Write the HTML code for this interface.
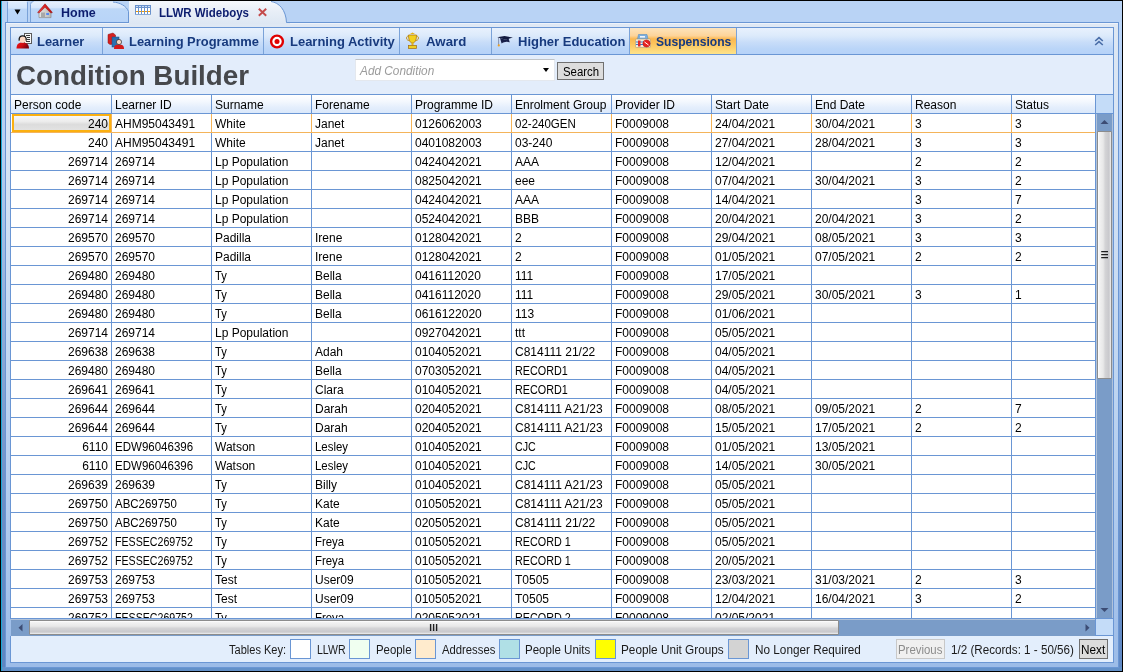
<!DOCTYPE html>
<html><head><meta charset="utf-8">
<style>
*{box-sizing:border-box;margin:0;padding:0}
html,body{width:1123px;height:672px;overflow:hidden;background:#000}
body{position:relative;font-family:"Liberation Sans",sans-serif}
#wrap{position:absolute;left:0;top:0;width:1123px;height:672px;background:#000;will-change:transform;overflow:hidden}
.a{position:absolute}
.sx{transform-origin:0 0}
/* frame */
#cyan{left:1px;top:1px;width:1px;height:670px;background:#1aa8d4}
#outerL{left:2px;top:1px;width:3px;height:670px;background:linear-gradient(#c0d6f5 0%,#b6cef2 22%,#94b0dc 45%,#6c8ec6 75%,#5e86c2 100%)}
#outerR{left:1119px;top:1px;width:3px;height:670px;background:linear-gradient(#bcd6f8 0%,#b4cff6 25%,#8eb0e0 55%,#6a90c8 80%,#5f88c4 100%)}
#outerB{left:2px;top:667px;width:1120px;height:4px;background:#6290c8}
#strip{left:2px;top:1px;width:1120px;height:21px;background:#b9d3f5}
#panel{left:5px;top:22px;width:1114px;height:646px;border:1px solid #6a96d4;background:linear-gradient(#dde7f3 0%,#d8e4f3 18%,#c6daf2 45%,#b2ccee 75%,#9cbce8 100%)}
#panelhl{left:6px;top:23px;width:1112px;height:4px;background:#dfe8f4;border-top:1px solid #eef3fa}
/* tabs */
#dd{left:7px;top:1px;width:21px;height:21px;border:1px solid #7aa2d8;border-top-color:#e6f0fc;border-bottom:none;border-radius:2px 2px 0 0;background:linear-gradient(#deecfd 0%,#d2e4fa 30%,#bcd7f8 36%,#b8d4f8 100%)}
#home{left:30px;top:1px;width:99px;height:22px;border:1px solid #7aa2d8;border-top-color:#e6f0fc;border-bottom:none;border-radius:3px 0 0 0;background:linear-gradient(#deecfd 0%,#d2e4fa 30%,#bcd7f8 36%,#b8d4f8 100%)}
#hometxt{left:61px;top:5px;font-size:13px;font-weight:bold;color:#0c1d6e;transform:scaleX(0.96)}
#acttxt{left:159px;top:5px;font-size:13px;font-weight:bold;color:#0c1d6e;transform:scaleX(0.885)}
/* nav */
#nav{left:10px;top:27px;width:1104px;height:28px;border:1px solid #6a96d4;background:linear-gradient(#e8f1fd 0%,#dceafb 30%,#c8ddf9 55%,#bad5f8 80%,#b6d2f8 100%)}
.sep{top:28px;width:1px;height:26px;background:#7aa2d8}
.nt{top:33.5px;font-size:13.6px;font-weight:bold;color:#173a7e;white-space:nowrap}
#susp{left:630px;top:28px;width:107px;height:26px;background:linear-gradient(#fde4bc 0%,#fdd49a 30%,#fbb850 42%,#fcc45c 60%,#fde38a 100%);border-right:1px solid #7aa2d8}
#title{left:10px;top:55px;width:1104px;height:40px;border:1px solid #6a96d4;border-top:none;background:#e3edfb}
#ttl{left:16px;top:59px;font-size:28.5px;transform:scaleX(0.975);transform-origin:0 0;font-weight:bold;color:#46484c;white-space:nowrap}
#combo{left:355px;top:59px;width:200px;height:22px;background:#fff;border:1px solid #e4e8ee;border-top-color:#c0c4c8}
#combotxt{left:360px;top:64px;font-size:12px;font-style:italic;color:#9c9c9c;transform:scaleX(0.985);transform-origin:0 0}
#comboarr{left:543px;top:68px;width:0;height:0;border-left:3.5px solid transparent;border-right:3.5px solid transparent;border-top:4.5px solid #000}
#search{left:557px;top:62px;width:47px;height:18px;background:#dddddd;border:1px solid #707070}
#searchtxt{left:562.5px;top:64.5px;font-size:12px;color:#000;transform:scaleX(0.95);transform-origin:0 0}
/* grid */
#grid{left:10px;top:94px;width:1104px;height:525px;background:#fff;border:1px solid #6a96d4;border-bottom:none}
#hdr{left:11px;top:95px;width:1085px;height:18px;background:linear-gradient(#ffffff 0%,#f4f8fe 35%,#e4eefc 70%,#dae8fb 100%)}
#hdrline{left:11px;top:113px;width:1085px;height:1px;background:#6a96d4}
.hc{position:absolute;top:98px;height:16px;padding-left:3px;font-size:12px;color:#000;white-space:nowrap;overflow:hidden}
.c{position:absolute;height:19px;line-height:20px;padding-left:3px;font-size:12px;color:#000;white-space:nowrap;overflow:hidden}
.c .s{display:inline-block;transform-origin:0 0}
.c.r{text-align:right;padding-left:0;padding-right:3px}
.vl{position:absolute;top:95px;width:1px;height:523px;background:#6a96d4}
.hl{position:absolute;left:11px;width:1085px;height:1px;background:#6a96d4}
.hl.o{background:#f4b45a}
#sel{left:12px;top:114px;width:99px;height:18px;border:2px solid #fbb010;background:linear-gradient(#f8f8f8 0%,#ececec 40%,#dcdcdc 60%,#e2e2e2 100%)}
/* scrollbars */
#vsb{left:1095px;top:95px;width:19px;height:524px;border-left:1px solid #6a96d4;border-right:1px solid #6a96d4;background:#7a9cc8;box-shadow:inset 1px 0 #b0c2da,inset -1px 0 #b0c2da}
#vsbhdr{left:1096px;top:95px;width:17px;height:19px;background:#c4dcf8;border-bottom:1px solid #6a96d4}
#vthumb{left:1097px;top:131px;width:15px;height:248px;border:1px solid #8c8c8c;border-radius:1px;background:linear-gradient(90deg,#ffffff 0%,#f2f2f2 12%,#e8e8e8 40%,#d4d4d6 55%,#c8c8cc 85%,#f0f0f0 100%)}
#hsb{left:11px;top:618px;width:1084px;height:18px;background:#7a9cc8;border-top:1px solid #6a96d4;box-shadow:inset 0 1px #b0c2da}
#hthumb{left:29px;top:620px;width:810px;height:15px;border:1px solid #8c8c8c;border-radius:1px;background:linear-gradient(#ffffff 0%,#f2f2f2 12%,#e8e8e8 40%,#d4d4d6 55%,#c8c8cc 85%,#f0f0f0 100%)}
#corner{left:1095px;top:618px;width:19px;height:18px;background:#c4dcf8;border:1px solid #6a96d4}
#footer{left:10px;top:636px;width:1104px;height:27px;background:#e3eefc;border:1px solid #6a96d4;border-top:none}
.ft{top:643px;font-size:12px;color:#1a1a1a;white-space:nowrap}
.kb{top:639px;width:21px;height:20px;border:1px solid #6a96d4}
.btn{top:639px;height:20px;border:1px solid #b0b0b0}
</style></head><body><div id="wrap">
<div class="a" id="cyan"></div>
<div class="a" id="outerL"></div>
<div class="a" id="outerR"></div>
<div class="a" id="outerB"></div>
<div class="a" id="strip"></div>
<div class="a" id="panel"></div>
<div class="a" id="panelhl"></div>

<div class="a" id="dd"></div>
<svg class="a" style="left:14px;top:9px" width="7" height="6" viewBox="0 0 7 6"><path d="M0.5 0.5 H6.5 L3.5 5.5 Z" fill="#000"/></svg>
<svg class="a" style="left:29px;top:1px" width="101" height="21" viewBox="0 0 101 21">
 <defs><linearGradient id="htg" x1="0" y1="0" x2="0" y2="1"><stop offset="0" stop-color="#e8f1fd"/><stop offset="0.3" stop-color="#d6e6fb"/><stop offset="0.36" stop-color="#bcd7f8"/><stop offset="1" stop-color="#b8d4f8"/></linearGradient></defs>
 <path d="M1.5 21 V3.5 Q1.5 0.5 4.5 0.5 H84 C91 1 97.5 5 99.5 10.5 V21 Z" fill="url(#htg)"/>
 <path d="M1.5 21 V3.5 Q1.5 0.5 4.5 0.5" fill="none" stroke="#7aa2d8" stroke-width="1"/>
 <path d="M84 1 C91 1.5 97.5 5 99.5 10.5 V21" fill="none" stroke="#6a96d4" stroke-width="1"/>
</svg>
<svg class="a" style="left:37px;top:3px" width="16" height="16" viewBox="0 0 16 16">
 <defs><linearGradient id="hb" x1="0" y1="0" x2="1" y2="0"><stop offset="0" stop-color="#e8e8e8"/><stop offset="1" stop-color="#b8b8b8"/></linearGradient>
 <linearGradient id="rf" x1="0" y1="0" x2="1" y2="0"><stop offset="0" stop-color="#f04040"/><stop offset="1" stop-color="#c00808"/></linearGradient></defs>
 <path d="M2 8.5 L8 3 L14 8.5 L14 14.6 L2 14.6 Z" fill="url(#hb)" stroke="#8a8a8a" stroke-width="0.7"/>
 <rect x="4" y="9.5" width="4" height="5" fill="#a8a8a8"/>
 <rect x="9.2" y="10" width="2.8" height="2" fill="#5a8af0"/>
 <path d="M0.8 9.2 L8 0.8 L15.2 9.2 L15.2 9.8 L13.6 9.8 L8 4.2 L2.4 9.8 L0.8 9.8 Z" fill="url(#rf)" stroke="#901010" stroke-width="0.5"/>
</svg>
<div class="a sx" id="hometxt">Home</div>

<svg class="a" style="left:128px;top:1px" width="162" height="23" viewBox="0 0 162 23">
 <defs><linearGradient id="tg" x1="0" y1="0" x2="0" y2="1"><stop offset="0" stop-color="#f6f9fd"/><stop offset="0.45" stop-color="#e8eef7"/><stop offset="1" stop-color="#dde7f3"/></linearGradient></defs>
 <path d="M1 23 L1 0 L143 0 C151 1.5 158 9 158.5 21.5 L162 21.5 L162 23 Z" fill="url(#tg)"/>
 <path d="M143 0.5 C151 1.5 158 9 158.5 21.5 L162 21.5" fill="none" stroke="#6a96d4" stroke-width="1"/>
</svg>
<svg class="a" style="left:135px;top:5px" width="16" height="10" viewBox="0 0 16 10" shape-rendering="crispEdges">
 <rect x="0" y="0" width="16" height="10" fill="#6a92cc"/>
 <g fill="#fff"><rect x="1" y="3" width="2" height="6"/><rect x="4" y="3" width="2" height="6"/><rect x="7" y="3" width="2" height="6"/><rect x="10" y="3" width="2" height="6"/><rect x="13" y="3" width="2" height="6"/></g>
 <g fill="#c8dcf6"><rect x="1" y="1" width="2" height="1"/><rect x="4" y="1" width="2" height="1"/><rect x="7" y="1" width="2" height="1"/><rect x="10" y="1" width="2" height="1"/><rect x="13" y="1" width="2" height="1"/></g>
 <g fill="#f59a00"><rect x="1" y="6" width="2" height="1"/><rect x="4" y="6" width="2" height="1"/><rect x="7" y="6" width="2" height="1"/><rect x="10" y="6" width="2" height="1"/><rect x="13" y="6" width="2" height="1"/></g>
 <rect x="0" y="9" width="16" height="1" fill="#8aaad6"/>
</svg>
<div class="a sx" id="acttxt">LLWR Wideboys</div>
<svg class="a" style="left:257px;top:8px" width="11" height="9" viewBox="0 0 11 9">
 <path d="M1.8 0.8 L9.2 7.8 M9.2 0.8 L1.8 7.8" stroke="#c44a4a" stroke-width="1.9"/>
</svg>

<div class="a" id="nav"></div>
<div class="a" id="susp"></div>
<div class="a sep" style="left:102px"></div>
<div class="a sep" style="left:263px"></div>
<div class="a sep" style="left:399px"></div>
<div class="a sep" style="left:491px"></div>
<div class="a sep" style="left:629px"></div>
<div class="a nt sx" style="left:37px;transform:scaleX(0.95)">Learner</div>
<div class="a nt sx" style="left:129px;transform:scaleX(0.95)">Learning Programme</div>
<div class="a nt sx" style="left:290px;transform:scaleX(0.955)">Learning Activity</div>
<div class="a nt sx" style="left:426px;transform:scaleX(0.975)">Award</div>
<div class="a nt sx" style="left:518px;transform:scaleX(0.955)">Higher Education</div>
<div class="a nt sx" style="left:656px;transform:scaleX(0.89)">Suspensions</div>
<svg class="a" style="left:1094px;top:36px" width="10" height="10" viewBox="0 0 10 10">
 <path d="M1.2 5 L5 1.6 L8.8 5 M1.2 9 L5 5.6 L8.8 9" fill="none" stroke="#4a6ea8" stroke-width="1.6"/>
</svg>
<!-- nav icons -->
<svg class="a" style="left:16px;top:32px" width="17" height="18" viewBox="0 0 17 18">
 <defs><linearGradient id="rb" x1="0" y1="0" x2="1" y2="0.4"><stop offset="0" stop-color="#f41414"/><stop offset="0.6" stop-color="#c80c14"/><stop offset="1" stop-color="#7a0010"/></linearGradient></defs>
 <rect x="8.5" y="1.5" width="7" height="10" fill="#f8f8f8" stroke="#5a5a5a" stroke-width="1"/>
 <path d="M10 3.5 H14 M11 5.5 H14 M11 7.5 H14 M10 9.5 H14" stroke="#3a3a3a" stroke-width="1"/>
 <path d="M0.5 16.5 C0.5 12 3 10.5 6.5 10.5 C10 10.5 13 12 13 16.5 Z" fill="url(#rb)"/>
 <circle cx="6.7" cy="7.4" r="3.3" fill="#fcd8c4"/>
 <path d="M3.2 8.6 C2.8 5 4.5 3.8 6.7 3.8 C8.9 3.8 10.6 5 10.2 8.6" fill="none" stroke="#141414" stroke-width="1.3"/>
</svg>
<svg class="a" style="left:107px;top:32px" width="18" height="18" viewBox="0 0 18 18">
 <path d="M1 2.5 L6 1 L8.5 3 L8.5 12 L3 12.5 L1 11 Z" fill="#d42020" stroke="#901010" stroke-width="0.5"/>
 <rect x="5" y="5" width="7" height="10" fill="#2a70b0" stroke="#184a80" stroke-width="0.5"/>
 <path d="M7 17 C7 13.5 8.5 12.5 12 12.5 C15.5 12.5 17 13.5 17 17 Z" fill="#d41a1a"/>
 <circle cx="12" cy="10" r="2.6" fill="#f6d6c4" stroke="#2a2a2a" stroke-width="0.7"/>
</svg>
<svg class="a" style="left:269px;top:34px" width="16" height="16" viewBox="0 0 16 16">
 <circle cx="8" cy="7.5" r="5.9" fill="#fff" stroke="#e00000" stroke-width="2.4"/>
 <circle cx="8" cy="7.5" r="2.5" fill="#e00000"/>
</svg>
<svg class="a" style="left:405px;top:32px" width="15" height="18" viewBox="0 0 15 18">
 <path d="M5 2 L7.5 0.5 L10 2 Z" fill="#e8b010"/>
 <path d="M3.5 3 H11.5 C11.5 9 9.5 11 7.5 11 C5.5 11 3.5 9 3.5 3 Z" fill="#f2d020" stroke="#b07a10" stroke-width="0.8"/>
 <path d="M3.5 4 C0.5 4 1 9 4.5 8.5 M11.5 4 C14.5 4 14 9 10.5 8.5" fill="none" stroke="#c08a10" stroke-width="0.9"/>
 <rect x="6.5" y="11" width="2" height="2.5" fill="#e0b020"/>
 <rect x="3.5" y="13.5" width="8" height="3" fill="#f0d020" stroke="#a06a10" stroke-width="0.7"/>
</svg>
<svg class="a" style="left:497px;top:35px" width="17" height="12" viewBox="0 0 17 12">
 <path d="M0.3 2.3 L7.5 1 L15.8 2.6 L8.5 4.8 Z" fill="#141c40"/>
 <path d="M3 3 L4.6 8.6 C7 6.6 10.5 6 12.8 7.6 L11.6 3.6 L8.5 4.8 Z" fill="#18204a"/>
 <path d="M1.6 2.6 V10" stroke="#6a7290" stroke-width="0.7"/>
 <circle cx="1.8" cy="10.4" r="1.1" fill="#f0a020"/>
</svg>
<svg class="a" style="left:635px;top:34px" width="16" height="14" viewBox="0 0 16 14">
 <path d="M2.5 5 L3.5 0.5 L12 0.5 L13 5 Z" fill="#7aaee0" stroke="#5a8ec0" stroke-width="0.6"/>
 <rect x="5" y="2" width="5" height="1.6" fill="#f0f4f8"/>
 <rect x="0.5" y="5" width="15" height="8.5" rx="1" fill="#f4ecd8" stroke="#b09a70" stroke-width="0.6"/>
 <path d="M1 8 H15 M1 10.5 H15" stroke="#3a7ad0" stroke-width="1"/>
 <rect x="3" y="6.5" width="2.5" height="6" fill="#e02a2a"/>
 <circle cx="11.5" cy="9.5" r="3.6" fill="#e82020" stroke="#b01010" stroke-width="0.5"/>
 <path d="M9.5 8 L13.5 11" stroke="#fff" stroke-width="1"/>
</svg>

<div class="a" id="title"></div>
<div class="a" id="ttl">Condition Builder</div>
<div class="a" id="combo"></div>
<div class="a" id="combotxt">Add Condition</div>
<div class="a" id="comboarr"></div>
<div class="a" id="search"></div>
<div class="a" id="searchtxt">Search</div>

<div class="a" id="grid"></div>
<div class="a" id="hdr"></div>
<div class="a" id="sel"></div>
<div class="vl" style="left:111px"></div>
<div class="vl" style="left:111px;top:114px;height:18px;background:#f4b45a"></div>
<div class="vl" style="left:211px"></div>
<div class="vl" style="left:211px;top:114px;height:18px;background:#f4b45a"></div>
<div class="vl" style="left:311px"></div>
<div class="vl" style="left:311px;top:114px;height:18px;background:#f4b45a"></div>
<div class="vl" style="left:411px"></div>
<div class="vl" style="left:411px;top:114px;height:18px;background:#f4b45a"></div>
<div class="vl" style="left:511px"></div>
<div class="vl" style="left:511px;top:114px;height:18px;background:#f4b45a"></div>
<div class="vl" style="left:611px"></div>
<div class="vl" style="left:611px;top:114px;height:18px;background:#f4b45a"></div>
<div class="vl" style="left:711px"></div>
<div class="vl" style="left:711px;top:114px;height:18px;background:#f4b45a"></div>
<div class="vl" style="left:811px"></div>
<div class="vl" style="left:811px;top:114px;height:18px;background:#f4b45a"></div>
<div class="vl" style="left:911px"></div>
<div class="vl" style="left:911px;top:114px;height:18px;background:#f4b45a"></div>
<div class="vl" style="left:1011px"></div>
<div class="vl" style="left:1011px;top:114px;height:18px;background:#f4b45a"></div>
<div class="hl o" style="top:132px"></div>
<div class="hl" style="top:151px"></div>
<div class="hl" style="top:170px"></div>
<div class="hl" style="top:189px"></div>
<div class="hl" style="top:208px"></div>
<div class="hl" style="top:227px"></div>
<div class="hl" style="top:246px"></div>
<div class="hl" style="top:265px"></div>
<div class="hl" style="top:284px"></div>
<div class="hl" style="top:303px"></div>
<div class="hl" style="top:322px"></div>
<div class="hl" style="top:341px"></div>
<div class="hl" style="top:360px"></div>
<div class="hl" style="top:379px"></div>
<div class="hl" style="top:398px"></div>
<div class="hl" style="top:417px"></div>
<div class="hl" style="top:436px"></div>
<div class="hl" style="top:455px"></div>
<div class="hl" style="top:474px"></div>
<div class="hl" style="top:493px"></div>
<div class="hl" style="top:512px"></div>
<div class="hl" style="top:531px"></div>
<div class="hl" style="top:550px"></div>
<div class="hl" style="top:569px"></div>
<div class="hl" style="top:588px"></div>
<div class="hl" style="top:607px"></div>
<div class="a" id="hdrline"></div>
<div class="hc" style="left:11px;width:100px">Person code</div>
<div class="hc" style="left:112px;width:99px">Learner ID</div>
<div class="hc" style="left:212px;width:99px">Surname</div>
<div class="hc" style="left:312px;width:99px">Forename</div>
<div class="hc" style="left:412px;width:99px">Programme ID</div>
<div class="hc" style="left:512px;width:99px">Enrolment Group</div>
<div class="hc" style="left:612px;width:99px">Provider ID</div>
<div class="hc" style="left:712px;width:99px">Start Date</div>
<div class="hc" style="left:812px;width:99px">End Date</div>
<div class="hc" style="left:912px;width:99px">Reason</div>
<div class="hc" style="left:1012px;width:84px">Status</div>
<div class="c r" style="left:11px;top:114px;width:100px">240</div>
<div class="c" style="left:112px;top:114px;width:99px">AHM95043491</div>
<div class="c" style="left:212px;top:114px;width:99px">White</div>
<div class="c" style="left:312px;top:114px;width:99px">Janet</div>
<div class="c" style="left:412px;top:114px;width:99px">0126062003</div>
<div class="c" style="left:512px;top:114px;width:99px"><span class="s" style="transform:scaleX(0.96)">02-240GEN</span></div>
<div class="c" style="left:612px;top:114px;width:99px">F0009008</div>
<div class="c" style="left:712px;top:114px;width:99px">24/04/2021</div>
<div class="c" style="left:812px;top:114px;width:99px">30/04/2021</div>
<div class="c" style="left:912px;top:114px;width:99px">3</div>
<div class="c" style="left:1012px;top:114px;width:84px">3</div>
<div class="c r" style="left:11px;top:133px;width:100px">240</div>
<div class="c" style="left:112px;top:133px;width:99px">AHM95043491</div>
<div class="c" style="left:212px;top:133px;width:99px">White</div>
<div class="c" style="left:312px;top:133px;width:99px">Janet</div>
<div class="c" style="left:412px;top:133px;width:99px">0401082003</div>
<div class="c" style="left:512px;top:133px;width:99px">03-240</div>
<div class="c" style="left:612px;top:133px;width:99px">F0009008</div>
<div class="c" style="left:712px;top:133px;width:99px">27/04/2021</div>
<div class="c" style="left:812px;top:133px;width:99px">28/04/2021</div>
<div class="c" style="left:912px;top:133px;width:99px">3</div>
<div class="c" style="left:1012px;top:133px;width:84px">3</div>
<div class="c r" style="left:11px;top:152px;width:100px">269714</div>
<div class="c" style="left:112px;top:152px;width:99px">269714</div>
<div class="c" style="left:212px;top:152px;width:99px">Lp Population</div>
<div class="c" style="left:412px;top:152px;width:99px">0424042021</div>
<div class="c" style="left:512px;top:152px;width:99px">AAA</div>
<div class="c" style="left:612px;top:152px;width:99px">F0009008</div>
<div class="c" style="left:712px;top:152px;width:99px">12/04/2021</div>
<div class="c" style="left:912px;top:152px;width:99px">2</div>
<div class="c" style="left:1012px;top:152px;width:84px">2</div>
<div class="c r" style="left:11px;top:171px;width:100px">269714</div>
<div class="c" style="left:112px;top:171px;width:99px">269714</div>
<div class="c" style="left:212px;top:171px;width:99px">Lp Population</div>
<div class="c" style="left:412px;top:171px;width:99px">0825042021</div>
<div class="c" style="left:512px;top:171px;width:99px">eee</div>
<div class="c" style="left:612px;top:171px;width:99px">F0009008</div>
<div class="c" style="left:712px;top:171px;width:99px">07/04/2021</div>
<div class="c" style="left:812px;top:171px;width:99px">30/04/2021</div>
<div class="c" style="left:912px;top:171px;width:99px">3</div>
<div class="c" style="left:1012px;top:171px;width:84px">2</div>
<div class="c r" style="left:11px;top:190px;width:100px">269714</div>
<div class="c" style="left:112px;top:190px;width:99px">269714</div>
<div class="c" style="left:212px;top:190px;width:99px">Lp Population</div>
<div class="c" style="left:412px;top:190px;width:99px">0424042021</div>
<div class="c" style="left:512px;top:190px;width:99px">AAA</div>
<div class="c" style="left:612px;top:190px;width:99px">F0009008</div>
<div class="c" style="left:712px;top:190px;width:99px">14/04/2021</div>
<div class="c" style="left:912px;top:190px;width:99px">3</div>
<div class="c" style="left:1012px;top:190px;width:84px">7</div>
<div class="c r" style="left:11px;top:209px;width:100px">269714</div>
<div class="c" style="left:112px;top:209px;width:99px">269714</div>
<div class="c" style="left:212px;top:209px;width:99px">Lp Population</div>
<div class="c" style="left:412px;top:209px;width:99px">0524042021</div>
<div class="c" style="left:512px;top:209px;width:99px">BBB</div>
<div class="c" style="left:612px;top:209px;width:99px">F0009008</div>
<div class="c" style="left:712px;top:209px;width:99px">20/04/2021</div>
<div class="c" style="left:812px;top:209px;width:99px">20/04/2021</div>
<div class="c" style="left:912px;top:209px;width:99px">3</div>
<div class="c" style="left:1012px;top:209px;width:84px">2</div>
<div class="c r" style="left:11px;top:228px;width:100px">269570</div>
<div class="c" style="left:112px;top:228px;width:99px">269570</div>
<div class="c" style="left:212px;top:228px;width:99px">Padilla</div>
<div class="c" style="left:312px;top:228px;width:99px">Irene</div>
<div class="c" style="left:412px;top:228px;width:99px">0128042021</div>
<div class="c" style="left:512px;top:228px;width:99px">2</div>
<div class="c" style="left:612px;top:228px;width:99px">F0009008</div>
<div class="c" style="left:712px;top:228px;width:99px">29/04/2021</div>
<div class="c" style="left:812px;top:228px;width:99px">08/05/2021</div>
<div class="c" style="left:912px;top:228px;width:99px">3</div>
<div class="c" style="left:1012px;top:228px;width:84px">3</div>
<div class="c r" style="left:11px;top:247px;width:100px">269570</div>
<div class="c" style="left:112px;top:247px;width:99px">269570</div>
<div class="c" style="left:212px;top:247px;width:99px">Padilla</div>
<div class="c" style="left:312px;top:247px;width:99px">Irene</div>
<div class="c" style="left:412px;top:247px;width:99px">0128042021</div>
<div class="c" style="left:512px;top:247px;width:99px">2</div>
<div class="c" style="left:612px;top:247px;width:99px">F0009008</div>
<div class="c" style="left:712px;top:247px;width:99px">01/05/2021</div>
<div class="c" style="left:812px;top:247px;width:99px">07/05/2021</div>
<div class="c" style="left:912px;top:247px;width:99px">2</div>
<div class="c" style="left:1012px;top:247px;width:84px">2</div>
<div class="c r" style="left:11px;top:266px;width:100px">269480</div>
<div class="c" style="left:112px;top:266px;width:99px">269480</div>
<div class="c" style="left:212px;top:266px;width:99px"><span class="s" style="transform:scaleX(0.93)">Ty</span></div>
<div class="c" style="left:312px;top:266px;width:99px">Bella</div>
<div class="c" style="left:412px;top:266px;width:99px">0416112020</div>
<div class="c" style="left:512px;top:266px;width:99px">111</div>
<div class="c" style="left:612px;top:266px;width:99px">F0009008</div>
<div class="c" style="left:712px;top:266px;width:99px">17/05/2021</div>
<div class="c r" style="left:11px;top:285px;width:100px">269480</div>
<div class="c" style="left:112px;top:285px;width:99px">269480</div>
<div class="c" style="left:212px;top:285px;width:99px"><span class="s" style="transform:scaleX(0.93)">Ty</span></div>
<div class="c" style="left:312px;top:285px;width:99px">Bella</div>
<div class="c" style="left:412px;top:285px;width:99px">0416112020</div>
<div class="c" style="left:512px;top:285px;width:99px">111</div>
<div class="c" style="left:612px;top:285px;width:99px">F0009008</div>
<div class="c" style="left:712px;top:285px;width:99px">29/05/2021</div>
<div class="c" style="left:812px;top:285px;width:99px">30/05/2021</div>
<div class="c" style="left:912px;top:285px;width:99px">3</div>
<div class="c" style="left:1012px;top:285px;width:84px">1</div>
<div class="c r" style="left:11px;top:304px;width:100px">269480</div>
<div class="c" style="left:112px;top:304px;width:99px">269480</div>
<div class="c" style="left:212px;top:304px;width:99px"><span class="s" style="transform:scaleX(0.93)">Ty</span></div>
<div class="c" style="left:312px;top:304px;width:99px">Bella</div>
<div class="c" style="left:412px;top:304px;width:99px">0616122020</div>
<div class="c" style="left:512px;top:304px;width:99px">113</div>
<div class="c" style="left:612px;top:304px;width:99px">F0009008</div>
<div class="c" style="left:712px;top:304px;width:99px">01/06/2021</div>
<div class="c r" style="left:11px;top:323px;width:100px">269714</div>
<div class="c" style="left:112px;top:323px;width:99px">269714</div>
<div class="c" style="left:212px;top:323px;width:99px">Lp Population</div>
<div class="c" style="left:412px;top:323px;width:99px">0927042021</div>
<div class="c" style="left:512px;top:323px;width:99px">ttt</div>
<div class="c" style="left:612px;top:323px;width:99px">F0009008</div>
<div class="c" style="left:712px;top:323px;width:99px">05/05/2021</div>
<div class="c r" style="left:11px;top:342px;width:100px">269638</div>
<div class="c" style="left:112px;top:342px;width:99px">269638</div>
<div class="c" style="left:212px;top:342px;width:99px"><span class="s" style="transform:scaleX(0.93)">Ty</span></div>
<div class="c" style="left:312px;top:342px;width:99px">Adah</div>
<div class="c" style="left:412px;top:342px;width:99px">0104052021</div>
<div class="c" style="left:512px;top:342px;width:99px">C814111 21/22</div>
<div class="c" style="left:612px;top:342px;width:99px">F0009008</div>
<div class="c" style="left:712px;top:342px;width:99px">04/05/2021</div>
<div class="c r" style="left:11px;top:361px;width:100px">269480</div>
<div class="c" style="left:112px;top:361px;width:99px">269480</div>
<div class="c" style="left:212px;top:361px;width:99px"><span class="s" style="transform:scaleX(0.93)">Ty</span></div>
<div class="c" style="left:312px;top:361px;width:99px">Bella</div>
<div class="c" style="left:412px;top:361px;width:99px">0703052021</div>
<div class="c" style="left:512px;top:361px;width:99px"><span class="s" style="transform:scaleX(0.9)">RECORD1</span></div>
<div class="c" style="left:612px;top:361px;width:99px">F0009008</div>
<div class="c" style="left:712px;top:361px;width:99px">04/05/2021</div>
<div class="c r" style="left:11px;top:380px;width:100px">269641</div>
<div class="c" style="left:112px;top:380px;width:99px">269641</div>
<div class="c" style="left:212px;top:380px;width:99px"><span class="s" style="transform:scaleX(0.93)">Ty</span></div>
<div class="c" style="left:312px;top:380px;width:99px">Clara</div>
<div class="c" style="left:412px;top:380px;width:99px">0104052021</div>
<div class="c" style="left:512px;top:380px;width:99px"><span class="s" style="transform:scaleX(0.9)">RECORD1</span></div>
<div class="c" style="left:612px;top:380px;width:99px">F0009008</div>
<div class="c" style="left:712px;top:380px;width:99px">04/05/2021</div>
<div class="c r" style="left:11px;top:399px;width:100px">269644</div>
<div class="c" style="left:112px;top:399px;width:99px">269644</div>
<div class="c" style="left:212px;top:399px;width:99px"><span class="s" style="transform:scaleX(0.93)">Ty</span></div>
<div class="c" style="left:312px;top:399px;width:99px">Darah</div>
<div class="c" style="left:412px;top:399px;width:99px">0204052021</div>
<div class="c" style="left:512px;top:399px;width:99px">C814111 A21/23</div>
<div class="c" style="left:612px;top:399px;width:99px">F0009008</div>
<div class="c" style="left:712px;top:399px;width:99px">08/05/2021</div>
<div class="c" style="left:812px;top:399px;width:99px">09/05/2021</div>
<div class="c" style="left:912px;top:399px;width:99px">2</div>
<div class="c" style="left:1012px;top:399px;width:84px">7</div>
<div class="c r" style="left:11px;top:418px;width:100px">269644</div>
<div class="c" style="left:112px;top:418px;width:99px">269644</div>
<div class="c" style="left:212px;top:418px;width:99px"><span class="s" style="transform:scaleX(0.93)">Ty</span></div>
<div class="c" style="left:312px;top:418px;width:99px">Darah</div>
<div class="c" style="left:412px;top:418px;width:99px">0204052021</div>
<div class="c" style="left:512px;top:418px;width:99px">C814111 A21/23</div>
<div class="c" style="left:612px;top:418px;width:99px">F0009008</div>
<div class="c" style="left:712px;top:418px;width:99px">15/05/2021</div>
<div class="c" style="left:812px;top:418px;width:99px">17/05/2021</div>
<div class="c" style="left:912px;top:418px;width:99px">2</div>
<div class="c" style="left:1012px;top:418px;width:84px">2</div>
<div class="c r" style="left:11px;top:437px;width:100px">6110</div>
<div class="c" style="left:112px;top:437px;width:99px"><span class="s" style="transform:scaleX(0.96)">EDW96046396</span></div>
<div class="c" style="left:212px;top:437px;width:99px">Watson</div>
<div class="c" style="left:312px;top:437px;width:99px"><span class="s" style="transform:scaleX(0.95)">Lesley</span></div>
<div class="c" style="left:412px;top:437px;width:99px">0104052021</div>
<div class="c" style="left:512px;top:437px;width:99px"><span class="s" style="transform:scaleX(0.89)">CJC</span></div>
<div class="c" style="left:612px;top:437px;width:99px">F0009008</div>
<div class="c" style="left:712px;top:437px;width:99px">01/05/2021</div>
<div class="c" style="left:812px;top:437px;width:99px">13/05/2021</div>
<div class="c r" style="left:11px;top:456px;width:100px">6110</div>
<div class="c" style="left:112px;top:456px;width:99px"><span class="s" style="transform:scaleX(0.96)">EDW96046396</span></div>
<div class="c" style="left:212px;top:456px;width:99px">Watson</div>
<div class="c" style="left:312px;top:456px;width:99px"><span class="s" style="transform:scaleX(0.95)">Lesley</span></div>
<div class="c" style="left:412px;top:456px;width:99px">0104052021</div>
<div class="c" style="left:512px;top:456px;width:99px"><span class="s" style="transform:scaleX(0.89)">CJC</span></div>
<div class="c" style="left:612px;top:456px;width:99px">F0009008</div>
<div class="c" style="left:712px;top:456px;width:99px">14/05/2021</div>
<div class="c" style="left:812px;top:456px;width:99px">30/05/2021</div>
<div class="c r" style="left:11px;top:475px;width:100px">269639</div>
<div class="c" style="left:112px;top:475px;width:99px">269639</div>
<div class="c" style="left:212px;top:475px;width:99px"><span class="s" style="transform:scaleX(0.93)">Ty</span></div>
<div class="c" style="left:312px;top:475px;width:99px">Billy</div>
<div class="c" style="left:412px;top:475px;width:99px">0104052021</div>
<div class="c" style="left:512px;top:475px;width:99px">C814111 A21/23</div>
<div class="c" style="left:612px;top:475px;width:99px">F0009008</div>
<div class="c" style="left:712px;top:475px;width:99px">05/05/2021</div>
<div class="c r" style="left:11px;top:494px;width:100px">269750</div>
<div class="c" style="left:112px;top:494px;width:99px"><span class="s" style="transform:scaleX(0.955)">ABC269750</span></div>
<div class="c" style="left:212px;top:494px;width:99px"><span class="s" style="transform:scaleX(0.93)">Ty</span></div>
<div class="c" style="left:312px;top:494px;width:99px">Kate</div>
<div class="c" style="left:412px;top:494px;width:99px">0105052021</div>
<div class="c" style="left:512px;top:494px;width:99px">C814111 A21/23</div>
<div class="c" style="left:612px;top:494px;width:99px">F0009008</div>
<div class="c" style="left:712px;top:494px;width:99px">05/05/2021</div>
<div class="c r" style="left:11px;top:513px;width:100px">269750</div>
<div class="c" style="left:112px;top:513px;width:99px"><span class="s" style="transform:scaleX(0.955)">ABC269750</span></div>
<div class="c" style="left:212px;top:513px;width:99px"><span class="s" style="transform:scaleX(0.93)">Ty</span></div>
<div class="c" style="left:312px;top:513px;width:99px">Kate</div>
<div class="c" style="left:412px;top:513px;width:99px">0205052021</div>
<div class="c" style="left:512px;top:513px;width:99px">C814111 21/22</div>
<div class="c" style="left:612px;top:513px;width:99px">F0009008</div>
<div class="c" style="left:712px;top:513px;width:99px">05/05/2021</div>
<div class="c r" style="left:11px;top:532px;width:100px">269752</div>
<div class="c" style="left:112px;top:532px;width:99px"><span class="s" style="transform:scaleX(0.885)">FESSEC269752</span></div>
<div class="c" style="left:212px;top:532px;width:99px"><span class="s" style="transform:scaleX(0.93)">Ty</span></div>
<div class="c" style="left:312px;top:532px;width:99px"><span class="s" style="transform:scaleX(0.95)">Freya</span></div>
<div class="c" style="left:412px;top:532px;width:99px">0105052021</div>
<div class="c" style="left:512px;top:532px;width:99px"><span class="s" style="transform:scaleX(0.9)">RECORD 1</span></div>
<div class="c" style="left:612px;top:532px;width:99px">F0009008</div>
<div class="c" style="left:712px;top:532px;width:99px">05/05/2021</div>
<div class="c r" style="left:11px;top:551px;width:100px">269752</div>
<div class="c" style="left:112px;top:551px;width:99px"><span class="s" style="transform:scaleX(0.885)">FESSEC269752</span></div>
<div class="c" style="left:212px;top:551px;width:99px"><span class="s" style="transform:scaleX(0.93)">Ty</span></div>
<div class="c" style="left:312px;top:551px;width:99px"><span class="s" style="transform:scaleX(0.95)">Freya</span></div>
<div class="c" style="left:412px;top:551px;width:99px">0105052021</div>
<div class="c" style="left:512px;top:551px;width:99px"><span class="s" style="transform:scaleX(0.9)">RECORD 1</span></div>
<div class="c" style="left:612px;top:551px;width:99px">F0009008</div>
<div class="c" style="left:712px;top:551px;width:99px">20/05/2021</div>
<div class="c r" style="left:11px;top:570px;width:100px">269753</div>
<div class="c" style="left:112px;top:570px;width:99px">269753</div>
<div class="c" style="left:212px;top:570px;width:99px">Test</div>
<div class="c" style="left:312px;top:570px;width:99px">User09</div>
<div class="c" style="left:412px;top:570px;width:99px">0105052021</div>
<div class="c" style="left:512px;top:570px;width:99px">T0505</div>
<div class="c" style="left:612px;top:570px;width:99px">F0009008</div>
<div class="c" style="left:712px;top:570px;width:99px">23/03/2021</div>
<div class="c" style="left:812px;top:570px;width:99px">31/03/2021</div>
<div class="c" style="left:912px;top:570px;width:99px">2</div>
<div class="c" style="left:1012px;top:570px;width:84px">3</div>
<div class="c r" style="left:11px;top:589px;width:100px">269753</div>
<div class="c" style="left:112px;top:589px;width:99px">269753</div>
<div class="c" style="left:212px;top:589px;width:99px">Test</div>
<div class="c" style="left:312px;top:589px;width:99px">User09</div>
<div class="c" style="left:412px;top:589px;width:99px">0105052021</div>
<div class="c" style="left:512px;top:589px;width:99px">T0505</div>
<div class="c" style="left:612px;top:589px;width:99px">F0009008</div>
<div class="c" style="left:712px;top:589px;width:99px">12/04/2021</div>
<div class="c" style="left:812px;top:589px;width:99px">16/04/2021</div>
<div class="c" style="left:912px;top:589px;width:99px">3</div>
<div class="c" style="left:1012px;top:589px;width:84px">2</div>
<div class="c r" style="left:11px;top:608px;width:100px">269752</div>
<div class="c" style="left:112px;top:608px;width:99px"><span class="s" style="transform:scaleX(0.885)">FESSEC269752</span></div>
<div class="c" style="left:212px;top:608px;width:99px"><span class="s" style="transform:scaleX(0.93)">Ty</span></div>
<div class="c" style="left:312px;top:608px;width:99px"><span class="s" style="transform:scaleX(0.95)">Freya</span></div>
<div class="c" style="left:412px;top:608px;width:99px">0205052021</div>
<div class="c" style="left:512px;top:608px;width:99px"><span class="s" style="transform:scaleX(0.9)">RECORD 2</span></div>
<div class="c" style="left:612px;top:608px;width:99px">F0009008</div>
<div class="c" style="left:712px;top:608px;width:99px">02/05/2021</div>

<div class="a" id="vsb"></div>
<div class="a" id="vsbhdr"></div>
<div class="a" id="vthumb"></div>
<svg class="a" style="left:1100px;top:119px" width="9" height="6" viewBox="0 0 9 6"><path d="M0.5 5 L4.5 1 L8.5 5 Z" fill="#3c4c74"/></svg>
<svg class="a" style="left:1100px;top:607px" width="9" height="6" viewBox="0 0 9 6"><path d="M0.5 1 L4.5 5 L8.5 1 Z" fill="#3c4c74"/></svg>
<svg class="a" style="left:1100px;top:249px" width="9" height="11" viewBox="0 0 9 11"><path d="M1.2 2.6 H8 M1.2 5.6 H8 M1.2 8.6 H8" stroke="#202020" stroke-width="1.4"/></svg>
<div class="a" id="hsb"></div>
<div class="a" id="hthumb"></div>
<svg class="a" style="left:18px;top:624px" width="5" height="8" viewBox="0 0 5 8"><path d="M4.5 0 L0.5 3.8 L4.5 7.5 Z" fill="#3c4c74"/></svg>
<svg class="a" style="left:1084.5px;top:624px" width="5" height="8" viewBox="0 0 5 8"><path d="M0.5 0 L4.5 3.8 L0.5 7.5 Z" fill="#3c4c74"/></svg>
<svg class="a" style="left:429px;top:623px" width="9" height="9" viewBox="0 0 9 9"><path d="M1.6 1 V8 M4.6 1 V8 M7.6 1 V8" stroke="#202020" stroke-width="1.4"/></svg>
<div class="a" id="corner"></div>

<div class="a" id="footer"></div>
<div class="a ft sx" style="left:229px;transform:scaleX(0.92)">Tables Key:</div>
<div class="a kb" style="left:290px;background:#ffffff"></div>
<div class="a ft sx" style="left:317px;transform:scaleX(0.88)">LLWR</div>
<div class="a kb" style="left:349px;background:#f0fff0"></div>
<div class="a ft sx" style="left:376px;transform:scaleX(0.95)">People</div>
<div class="a kb" style="left:415px;background:#ffebcd"></div>
<div class="a ft sx" style="left:442px;transform:scaleX(0.94)">Addresses</div>
<div class="a kb" style="left:499px;background:#b0e0e6"></div>
<div class="a ft sx" style="left:525px;transform:scaleX(0.96)">People Units</div>
<div class="a kb" style="left:595px;background:#ffff00"></div>
<div class="a ft sx" style="left:621px;transform:scaleX(0.98)">People Unit Groups</div>
<div class="a kb" style="left:728px;background:#d3d3d3"></div>
<div class="a ft sx" style="left:755px;transform:scaleX(0.98)">No Longer Required</div>
<div class="a btn" style="left:896px;width:49px;background:#f0f0f0;border-color:#c8c8c8"></div>
<div class="a ft sx" style="left:898px;color:#8c8c8c;transform:scaleX(0.95)">Previous</div>
<div class="a ft sx" style="left:951px;transform:scaleX(0.97)">1/2 (Records: 1 - 50/56)</div>
<div class="a btn" style="left:1079px;width:29px;background:#dcdcdc;border-color:#707070"></div>
<div class="a ft sx" style="left:1081px;color:#000;transform:scaleX(0.98)">Next</div>
</div></body></html>
